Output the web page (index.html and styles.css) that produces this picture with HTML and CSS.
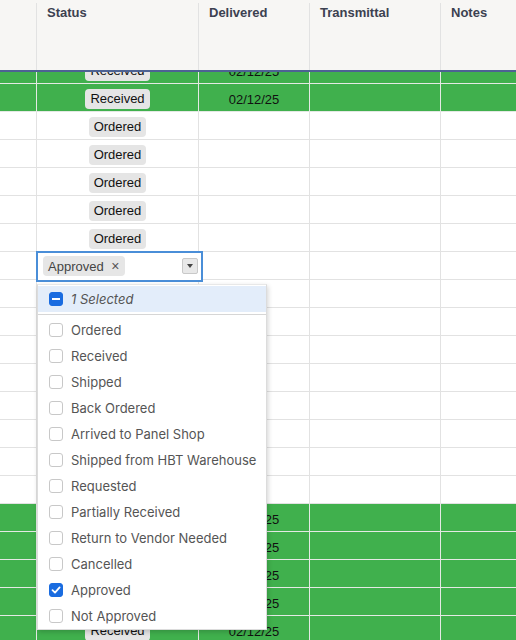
FILE: index.html
```html
<!DOCTYPE html>
<html lang="en">
<head>
    <meta charset="UTF-8">
    <title>Orders</title>
    <link rel="stylesheet" href="styles.css">
</head>
<body>

<div class="grid">
    <div class="grid-head">
        <div class="cell col-first"></div>
        <div class="cell col-status">Status</div>
        <div class="cell col-delivered">Delivered</div>
        <div class="cell col-transmittal">Transmittal</div>
        <div class="cell col-notes">Notes</div>
    </div>

    <div class="grid-body">
        <div class="rows">
            <div class="row done">
                <div class="cell col-first"></div>
                <div class="cell col-status"><span class="chip">Received</span></div>
                <div class="cell col-delivered">02/12/25</div>
                <div class="cell col-transmittal"></div>
                <div class="cell col-notes"></div>
            </div>
            <div class="row done">
                <div class="cell col-first"></div>
                <div class="cell col-status"><span class="chip">Received</span></div>
                <div class="cell col-delivered">02/12/25</div>
                <div class="cell col-transmittal"></div>
                <div class="cell col-notes"></div>
            </div>
            <div class="row">
                <div class="cell col-first"></div>
                <div class="cell col-status"><span class="chip">Ordered</span></div>
                <div class="cell col-delivered"></div>
                <div class="cell col-transmittal"></div>
                <div class="cell col-notes"></div>
            </div>
            <div class="row">
                <div class="cell col-first"></div>
                <div class="cell col-status"><span class="chip">Ordered</span></div>
                <div class="cell col-delivered"></div>
                <div class="cell col-transmittal"></div>
                <div class="cell col-notes"></div>
            </div>
            <div class="row">
                <div class="cell col-first"></div>
                <div class="cell col-status"><span class="chip">Ordered</span></div>
                <div class="cell col-delivered"></div>
                <div class="cell col-transmittal"></div>
                <div class="cell col-notes"></div>
            </div>
            <div class="row">
                <div class="cell col-first"></div>
                <div class="cell col-status"><span class="chip">Ordered</span></div>
                <div class="cell col-delivered"></div>
                <div class="cell col-transmittal"></div>
                <div class="cell col-notes"></div>
            </div>
            <div class="row">
                <div class="cell col-first"></div>
                <div class="cell col-status"><span class="chip">Ordered</span></div>
                <div class="cell col-delivered"></div>
                <div class="cell col-transmittal"></div>
                <div class="cell col-notes"></div>
            </div>
            <!-- row being edited -->
            <div class="row">
                <div class="cell col-first"></div>
                <div class="cell col-status"></div>
                <div class="cell col-delivered"></div>
                <div class="cell col-transmittal"></div>
                <div class="cell col-notes"></div>
            </div>
            <div class="row"><div class="cell col-first"></div><div class="cell col-status"></div><div class="cell col-delivered"></div><div class="cell col-transmittal"></div><div class="cell col-notes"></div></div>
            <div class="row"><div class="cell col-first"></div><div class="cell col-status"></div><div class="cell col-delivered"></div><div class="cell col-transmittal"></div><div class="cell col-notes"></div></div>
            <div class="row"><div class="cell col-first"></div><div class="cell col-status"></div><div class="cell col-delivered"></div><div class="cell col-transmittal"></div><div class="cell col-notes"></div></div>
            <div class="row"><div class="cell col-first"></div><div class="cell col-status"></div><div class="cell col-delivered"></div><div class="cell col-transmittal"></div><div class="cell col-notes"></div></div>
            <div class="row"><div class="cell col-first"></div><div class="cell col-status"></div><div class="cell col-delivered"></div><div class="cell col-transmittal"></div><div class="cell col-notes"></div></div>
            <div class="row"><div class="cell col-first"></div><div class="cell col-status"></div><div class="cell col-delivered"></div><div class="cell col-transmittal"></div><div class="cell col-notes"></div></div>
            <div class="row"><div class="cell col-first"></div><div class="cell col-status"></div><div class="cell col-delivered"></div><div class="cell col-transmittal"></div><div class="cell col-notes"></div></div>
            <div class="row"><div class="cell col-first"></div><div class="cell col-status"></div><div class="cell col-delivered"></div><div class="cell col-transmittal"></div><div class="cell col-notes"></div></div>
            <!-- status chips of these rows sit under the open list -->
            <div class="row done">
                <div class="cell col-first"></div>
                <div class="cell col-status"></div>
                <div class="cell col-delivered">02/12/25</div>
                <div class="cell col-transmittal"></div>
                <div class="cell col-notes"></div>
            </div>
            <div class="row done">
                <div class="cell col-first"></div>
                <div class="cell col-status"></div>
                <div class="cell col-delivered">02/12/25</div>
                <div class="cell col-transmittal"></div>
                <div class="cell col-notes"></div>
            </div>
            <div class="row done">
                <div class="cell col-first"></div>
                <div class="cell col-status"></div>
                <div class="cell col-delivered">02/12/25</div>
                <div class="cell col-transmittal"></div>
                <div class="cell col-notes"></div>
            </div>
            <div class="row done">
                <div class="cell col-first"></div>
                <div class="cell col-status"></div>
                <div class="cell col-delivered">02/12/25</div>
                <div class="cell col-transmittal"></div>
                <div class="cell col-notes"></div>
            </div>
            <div class="row done">
                <div class="cell col-first"></div>
                <div class="cell col-status"><span class="chip">Received</span></div>
                <div class="cell col-delivered">02/12/25</div>
                <div class="cell col-transmittal"></div>
                <div class="cell col-notes"></div>
            </div>
        </div>
    </div>

    <!-- Status editor, open over the cell -->
    <div class="editor">
        <span class="tag">Approved <span class="tag-x">&times;</span></span>
        <span class="toggle"><span class="caret"></span></span>
    </div>

    <div class="picker">
        <div class="picker-head">
            <span class="box partial"><span class="dash"></span></span>
            <span class="picker-count">1 Selected</span>
        </div>
        <div class="picker-sep"></div>
        <div class="option"><span class="box"></span>Ordered</div>
        <div class="option"><span class="box"></span>Received</div>
        <div class="option"><span class="box"></span>Shipped</div>
        <div class="option"><span class="box"></span>Back Ordered</div>
        <div class="option"><span class="box"></span>Arrived to Panel Shop</div>
        <div class="option"><span class="box"></span>Shipped from HBT Warehouse</div>
        <div class="option"><span class="box"></span>Requested</div>
        <div class="option"><span class="box"></span>Partially Received</div>
        <div class="option"><span class="box"></span>Return to Vendor Needed</div>
        <div class="option"><span class="box"></span>Cancelled</div>
        <div class="option">
            <span class="box checked">
                <svg width="10" height="10" viewBox="0 0 10 10"><path d="M1.5 5.2 L4 7.6 L8.6 2.4" fill="none" stroke="#fff" stroke-width="1.8" stroke-linecap="round" stroke-linejoin="round"/></svg>
            </span>Approved
        </div>
        <div class="option"><span class="box"></span>Not Approved</div>
    </div>
</div>

</body>
</html>
```

FILE: styles.css
```css
body {
    margin: 0;
    padding: 0;
    background: #fff;
    font-family: "Liberation Sans", Arial, sans-serif;
    font-size: 13px;
    color: #111;
    overflow: hidden;
}

.grid {
    position: relative;
    width: 516px;
    height: 640px;
    overflow: hidden;
}

.grid-head {
    display: flex;
    background: #f7f6f4;
    border-bottom: 2px solid #4d6293;
    box-sizing: border-box;
    height: 72px;
    padding-top: 3px;
}

.grid-head .cell {
    font-weight: bold;
    color: #3c4150;
    padding: 2px 10px 0;
    border-right: 1px solid #e2e2e2;
    line-height: 16px;
}

.cell {
    box-sizing: border-box;
    flex: none;
}

.col-first { width: 37px; border-right: 1px solid #e2e2e2; }
.col-status { width: 162px; border-right: 1px solid #e2e2e2; }
.col-delivered { width: 111px; border-right: 1px solid #e2e2e2; }
.col-transmittal { width: 131px; border-right: 1px solid #e2e2e2; }
.col-notes { width: 120px; }

.grid-head .col-first { padding: 0; }

.grid-body {
    height: 568px;
    overflow: hidden;
}

.rows {
    margin-top: -16px;
}

.row {
    display: flex;
    height: 28px;
    border-bottom: 1px solid #e2e2e2;
    box-sizing: border-box;
    background: #fff;
}

.row .cell {
    display: flex;
    align-items: center;
    padding-top: 3px;
}

.row .col-status,
.row .col-delivered {
    justify-content: center;
}

.row.done {
    background: #40b04d;
    border-bottom-color: #e4e9e4;
}

.row.done .cell {
    border-right-color: #e4e9e4;
}

.chip {
    background: #e5e5e5;
    border-radius: 4px;
    padding: 0 5px;
    height: 20px;
    line-height: 20px;
    color: #111;
}

/* editor over the status cell */
.editor {
    position: absolute;
    left: 36px;
    top: 251px;
    width: 167px;
    height: 31px;
    box-sizing: border-box;
    border: 2px solid #4a8ed8;
    background: #fff;
    display: flex;
    align-items: flex-start;
    padding: 3px 3px 0 5px;
}

.tag {
    background: #e6e6e6;
    border-radius: 4px;
    height: 20px;
    line-height: 20px;
    padding: 0 6px 0 5px;
    color: #444;
}

.tag-x {
    margin-left: 4px;
    color: #555;
    font-size: 14px;
}

.toggle {
    margin-left: auto;
    margin-top: 2px;
    width: 16px;
    height: 16px;
    box-sizing: border-box;
    background: #e8e8e8;
    border: 1px solid #c9c9c9;
    border-radius: 2px;
    display: flex;
    align-items: center;
    justify-content: center;
}

.caret {
    width: 0;
    height: 0;
    border-left: 3.5px solid transparent;
    border-right: 3.5px solid transparent;
    border-top: 4px solid #444;
}

/* dropdown list */
.picker {
    position: absolute;
    left: 37px;
    top: 284px;
    width: 230px;
    box-sizing: border-box;
    background: #fff;
    border: 1px solid #dcdcdc;
    border-top-color: #e8e8e8;
    padding-top: 1px;
    box-shadow: 1px 2px 5px rgba(0, 0, 0, 0.18);
    font-family: Inter, "Noto Sans", sans-serif;
    font-size: 13px;
    color: #555;
}

.picker-head {
    display: flex;
    align-items: center;
    height: 26px;
    background: #e3edfa;
    padding-left: 11px;
}

.picker-count {
    font-style: italic;
}

.picker-sep {
    height: 1px;
    background: #d6d6d6;
    margin: 2px 0 2px;
}

.option {
    display: flex;
    align-items: center;
    height: 26px;
    padding-left: 11px;
}

.box {
    width: 14px;
    height: 14px;
    box-sizing: border-box;
    border: 1px solid #c8c8c8;
    border-radius: 3px;
    margin-right: 8px;
    display: flex;
    align-items: center;
    justify-content: center;
    background: #fff;
}

.box.partial,
.box.checked {
    background: #1a6ce0;
    border-color: #1a6ce0;
}

.dash {
    width: 8px;
    height: 2px;
    background: #fff;
}
```
